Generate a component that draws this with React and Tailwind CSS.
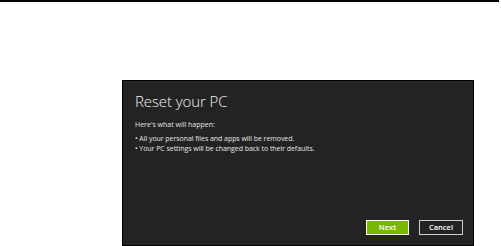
export default function App() {
  return (
    <div className="w-[501px] h-[246px] bg-white overflow-hidden" style={{ fontFamily: '"Open Sans", "Noto Sans", sans-serif' }}>
      {/* Top rule */}
      <div className="h-[2px] w-[499px] bg-black" />

      {/* Dialog */}
      <div className="ml-[122px] mt-[78px] w-[352px] h-[166px] border border-black bg-[#232323] flex flex-col pl-[12px] pr-[10px]">
        <h1 className="mt-[10px] text-[15px] leading-[20px] font-light text-[#f2f2f2] tracking-[-0.1px]">Reset your PC</h1>
        <p className="mt-[9px] text-[7px] leading-[10px] text-[#e6e6e6]">Here's what will happen:</p>
        <ul className="mt-[4px] text-[7px] leading-[10px] text-[#e6e6e6] tracking-[-0.05px]">
          <li>• All your personal files and apps will be removed.</li>
          <li>• Your PC settings will be changed back to their defaults.</li>
        </ul>
        <div className="mt-auto mb-[10px] flex justify-end gap-[10px]">
          <button className="w-[43px] h-[15px] bg-[#79b800] border border-white text-white text-[7.5px] font-semibold leading-none">Next</button>
          <button className="w-[44px] h-[15px] bg-[#232323] border border-[#cfcfcf] text-white text-[7.5px] font-semibold leading-none">Cancel</button>
        </div>
      </div>
    </div>
  );
}
